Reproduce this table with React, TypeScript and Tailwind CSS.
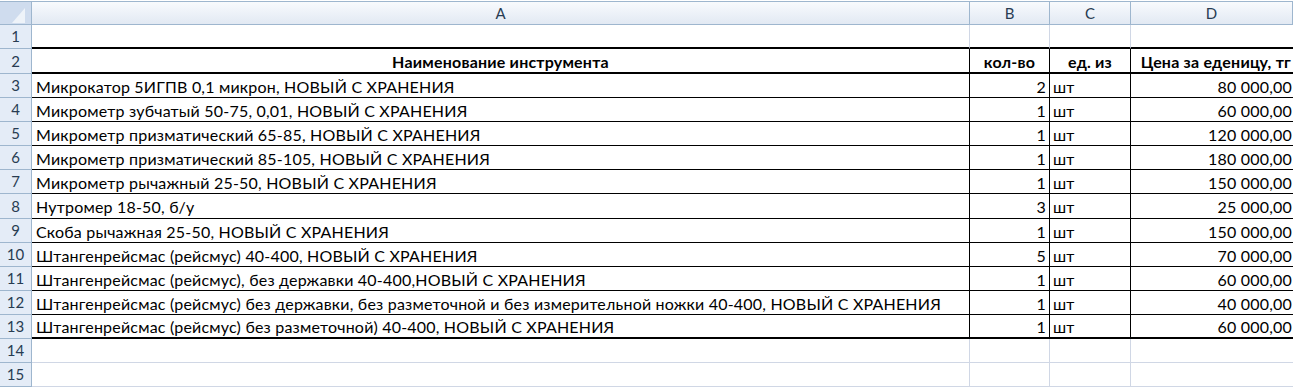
import React from 'react';

type Row = { name: string; qty: string; unit: string; price: string };

const rows: Row[] = [
  { name: 'Микрокатор 5ИГПВ 0,1 микрон, НОВЫЙ С ХРАНЕНИЯ', qty: '2', unit: 'шт', price: '80 000,00' },
  { name: 'Микрометр зубчатый 50-75, 0,01, НОВЫЙ С ХРАНЕНИЯ', qty: '1', unit: 'шт', price: '60 000,00' },
  { name: 'Микрометр призматический 65-85, НОВЫЙ С ХРАНЕНИЯ', qty: '1', unit: 'шт', price: '120 000,00' },
  { name: 'Микрометр призматический 85-105, НОВЫЙ С ХРАНЕНИЯ', qty: '1', unit: 'шт', price: '180 000,00' },
  { name: 'Микрометр рычажный 25-50, НОВЫЙ С ХРАНЕНИЯ', qty: '1', unit: 'шт', price: '150 000,00' },
  { name: 'Нутромер 18-50, б/у', qty: '3', unit: 'шт', price: '25 000,00' },
  { name: 'Скоба рычажная 25-50, НОВЫЙ С ХРАНЕНИЯ', qty: '1', unit: 'шт', price: '150 000,00' },
  { name: 'Штангенрейсмас (рейсмус) 40-400, НОВЫЙ С ХРАНЕНИЯ', qty: '5', unit: 'шт', price: '70 000,00' },
  { name: 'Штангенрейсмас (рейсмус), без державки 40-400,НОВЫЙ С ХРАНЕНИЯ', qty: '1', unit: 'шт', price: '60 000,00' },
  {
    name: 'Штангенрейсмас (рейсмус) без державки, без разметочной и без измерительной ножки 40-400, НОВЫЙ С ХРАНЕНИЯ',
    qty: '1',
    unit: 'шт',
    price: '40 000,00',
  },
  { name: 'Штангенрейсмас (рейсмус) без разметочной) 40-400, НОВЫЙ С ХРАНЕНИЯ', qty: '1', unit: 'шт', price: '60 000,00' },
];

const font = { fontFamily: 'Lato, "Liberation Sans", sans-serif' };

// row number cell on the left
const RowHead: React.FC<{ n: number }> = ({ n }) => (
  <div className="w-[32px] shrink-0 flex items-center justify-center bg-[#e4ecf7] border-r border-b border-[#9eb6ce] text-[15px] text-[#283c52]">
    {n}
  </div>
);

const EmptyRow: React.FC<{ n: number; bottom?: string }> = ({ n, bottom = 'border-b border-[#d0d7e5]' }) => (
  <div className="flex h-[24px]">
    <RowHead n={n} />
    <div className={`w-[938px] shrink-0 border-r border-[#d0d7e5] ${bottom}`} />
    <div className={`w-[80px] shrink-0 border-r border-[#d0d7e5] ${bottom}`} />
    <div className={`w-[81px] shrink-0 border-r border-[#d0d7e5] ${bottom}`} />
    <div className={`flex-1 ${bottom}`} />
  </div>
);

const cell = 'shrink-0 flex items-center pt-[2px] text-[16px] tracking-[0.2px] whitespace-nowrap';

export default function App() {
  return (
    <div className="w-[1293px] h-[387px] overflow-hidden bg-white text-black" style={font}>
      {/* column headers */}
      <div className="flex h-[25px] bg-white pt-[1px]">
        <div className="w-[32px] shrink-0 relative bg-[#cfdcee] border-t border-r border-b border-[#9eb6ce]">
          <svg className="absolute left-[12px] top-[6px]" width="14" height="16" viewBox="0 0 14 16">
            <polygon points="13,0 13,15 0,15" fill="#eef3f9" />
          </svg>
        </div>
        {[
          ['A', 'w-[938px]'],
          ['B', 'w-[80px]'],
          ['C', 'w-[81px]'],
          ['D', 'flex-1'],
        ].map(([l, w]) => (
          <div
            key={l}
            className={`${w} shrink-0 flex items-center justify-center border-t border-r border-b border-[#9eb6ce] bg-gradient-to-b from-[#f8fafd] to-[#e2e9f3] text-[15px] text-[#283c52]`}
          >
            {l}
          </div>
        ))}
      </div>

      <EmptyRow n={1} bottom="border-b-2 border-b-black" />

      {/* table header */}
      <div className="flex h-[25px]">
        <RowHead n={2} />
        <div className={`w-[938px] ${cell} justify-center border-r border-r-black border-b-2 border-b-black font-bold`}>
          Наименование инструмента
        </div>
        <div className={`w-[80px] ${cell} justify-center border-r border-r-black border-b-2 border-b-black font-bold`}>
          кол-во
        </div>
        <div className={`w-[81px] ${cell} justify-center border-r border-r-black border-b-2 border-b-black font-bold`}>
          ед. из
        </div>
        <div className={`flex-1 ${cell} justify-end pr-[2px] border-b-2 border-b-black font-bold`}>
          Цена за еденицу, тг
        </div>
      </div>

      {rows.map((r, i) => {
        const last = i === rows.length - 1;
        const b = last ? 'border-b-2 border-b-black' : 'border-b border-b-black';
        return (
          <div key={i} className={`flex ${i === 5 ? 'h-[25px]' : 'h-[24px]'}`}>
            <RowHead n={i + 3} />
            <div className={`w-[938px] ${cell} px-[4px] border-r border-r-black ${b}`}>{r.name}</div>
            <div className={`w-[80px] ${cell} justify-end px-[3px] border-r border-r-black ${b}`}>{r.qty}</div>
            <div className={`w-[81px] ${cell} px-[3px] border-r border-r-black ${b}`}>{r.unit}</div>
            <div className={`flex-1 ${cell} justify-end pr-[1px] ${b}`}>{r.price}</div>
          </div>
        );
      })}

      <EmptyRow n={14} />
      <EmptyRow n={15} />
    </div>
  );
}
